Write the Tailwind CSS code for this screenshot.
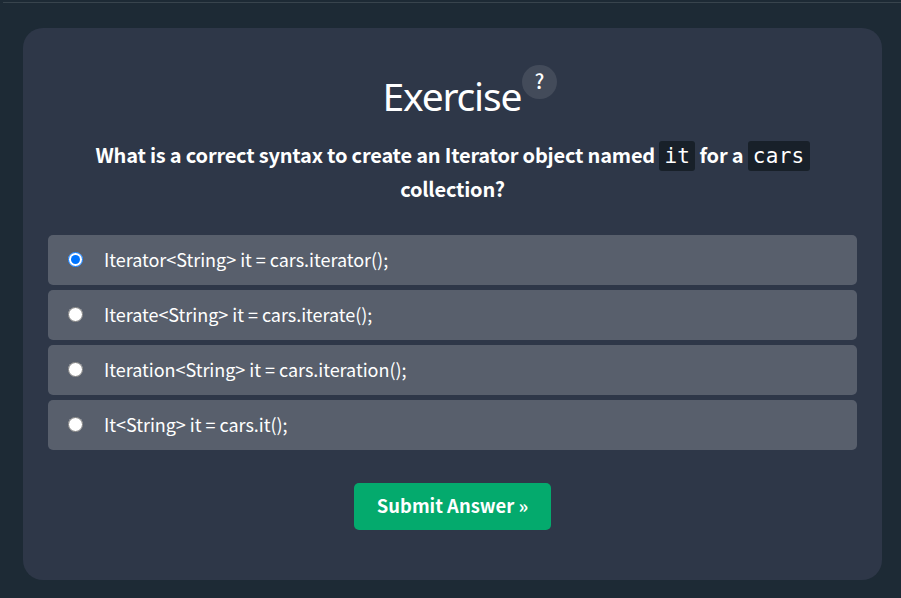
<!DOCTYPE html>
<html lang="en"><head><meta charset="utf-8"><title>Exercise</title><script src="https://cdn.jsdelivr.net/npm/@tailwindcss/browser@4"></script></head>
<body class="h-[598px] overflow-hidden border-t border-[#1d2a35] bg-[#1d2a35] font-['Noto_Sans_CJK_SC',sans-serif] text-white">
<div class="mt-px ml-[3px] h-px bg-[#38444d]"></div>
<main class="mt-[25px] ml-[23px] h-[552px] w-[859px] rounded-[20px] bg-[#2e3748] px-[25px] pt-[37px]">
<div class="flex h-[63px] justify-center pl-[35px]">
<h1 class="mt-[4px] w-[138px] font-['Noto_Sans',sans-serif] text-[39px] leading-[54px] tracking-[-1.2px] whitespace-nowrap -indent-[1px]">Exercise</h1>
<button class="flex h-[34px] w-[35px] justify-center rounded-full bg-[#434b5a] pl-px text-[20px] leading-[32px] font-medium">?</button>
</div>
<p class="mt-[10px] h-[69px] text-center text-[20px] leading-[34px] font-bold tracking-[-0.2px]">What is a correct syntax to create an Iterator object named <code class="-mt-[2px] mb-[1px] inline-block h-[30px] rounded-[3px] bg-[#182029] px-[5px] align-middle font-['DejaVu_Sans_Mono',monospace] text-[21px] leading-[30px] font-normal tracking-[0.3px]">it</code> for a <code class="-mt-[2px] mb-[1px] inline-block h-[30px] rounded-[3px] bg-[#182029] px-[5px] align-middle font-['DejaVu_Sans_Mono',monospace] text-[21px] leading-[30px] font-normal tracking-[0.3px]">cars</code><br>collection?</p>
<div class="mt-[28px] flex flex-col gap-[5px] text-[18px] tracking-[-0.03px]">
<label class="flex h-[50px] items-center rounded-[5px] bg-[#585f6c] pl-[20px]"><input type="radio" name="a" checked class="mr-[21px] mb-[2px] size-[15px]"><span class="pb-[2px]">Iterator&lt;String&gt; it = cars.iterator();</span></label>
<label class="flex h-[50px] items-center rounded-[5px] bg-[#585f6c] pl-[20px]"><input type="radio" name="a" class="mr-[21px] mb-[2px] size-[15px]"><span class="pb-[2px]">Iterate&lt;String&gt; it = cars.iterate();</span></label>
<label class="flex h-[50px] items-center rounded-[5px] bg-[#585f6c] pl-[20px]"><input type="radio" name="a" class="mr-[21px] mb-[2px] size-[15px]"><span class="pb-[2px]">Iteration&lt;String&gt; it = cars.iteration();</span></label>
<label class="flex h-[50px] items-center rounded-[5px] bg-[#585f6c] pl-[20px]"><input type="radio" name="a" class="mr-[21px] mb-[2px] size-[15px]"><span class="pb-[2px]">It&lt;String&gt; it = cars.it();</span></label>
</div>
<button class="mx-auto mt-[33px] block h-[47px] w-[197px] rounded-[5px] bg-[#04aa6d] pb-px text-[18.4px] font-bold">Submit Answer »</button>
</main></body></html>
